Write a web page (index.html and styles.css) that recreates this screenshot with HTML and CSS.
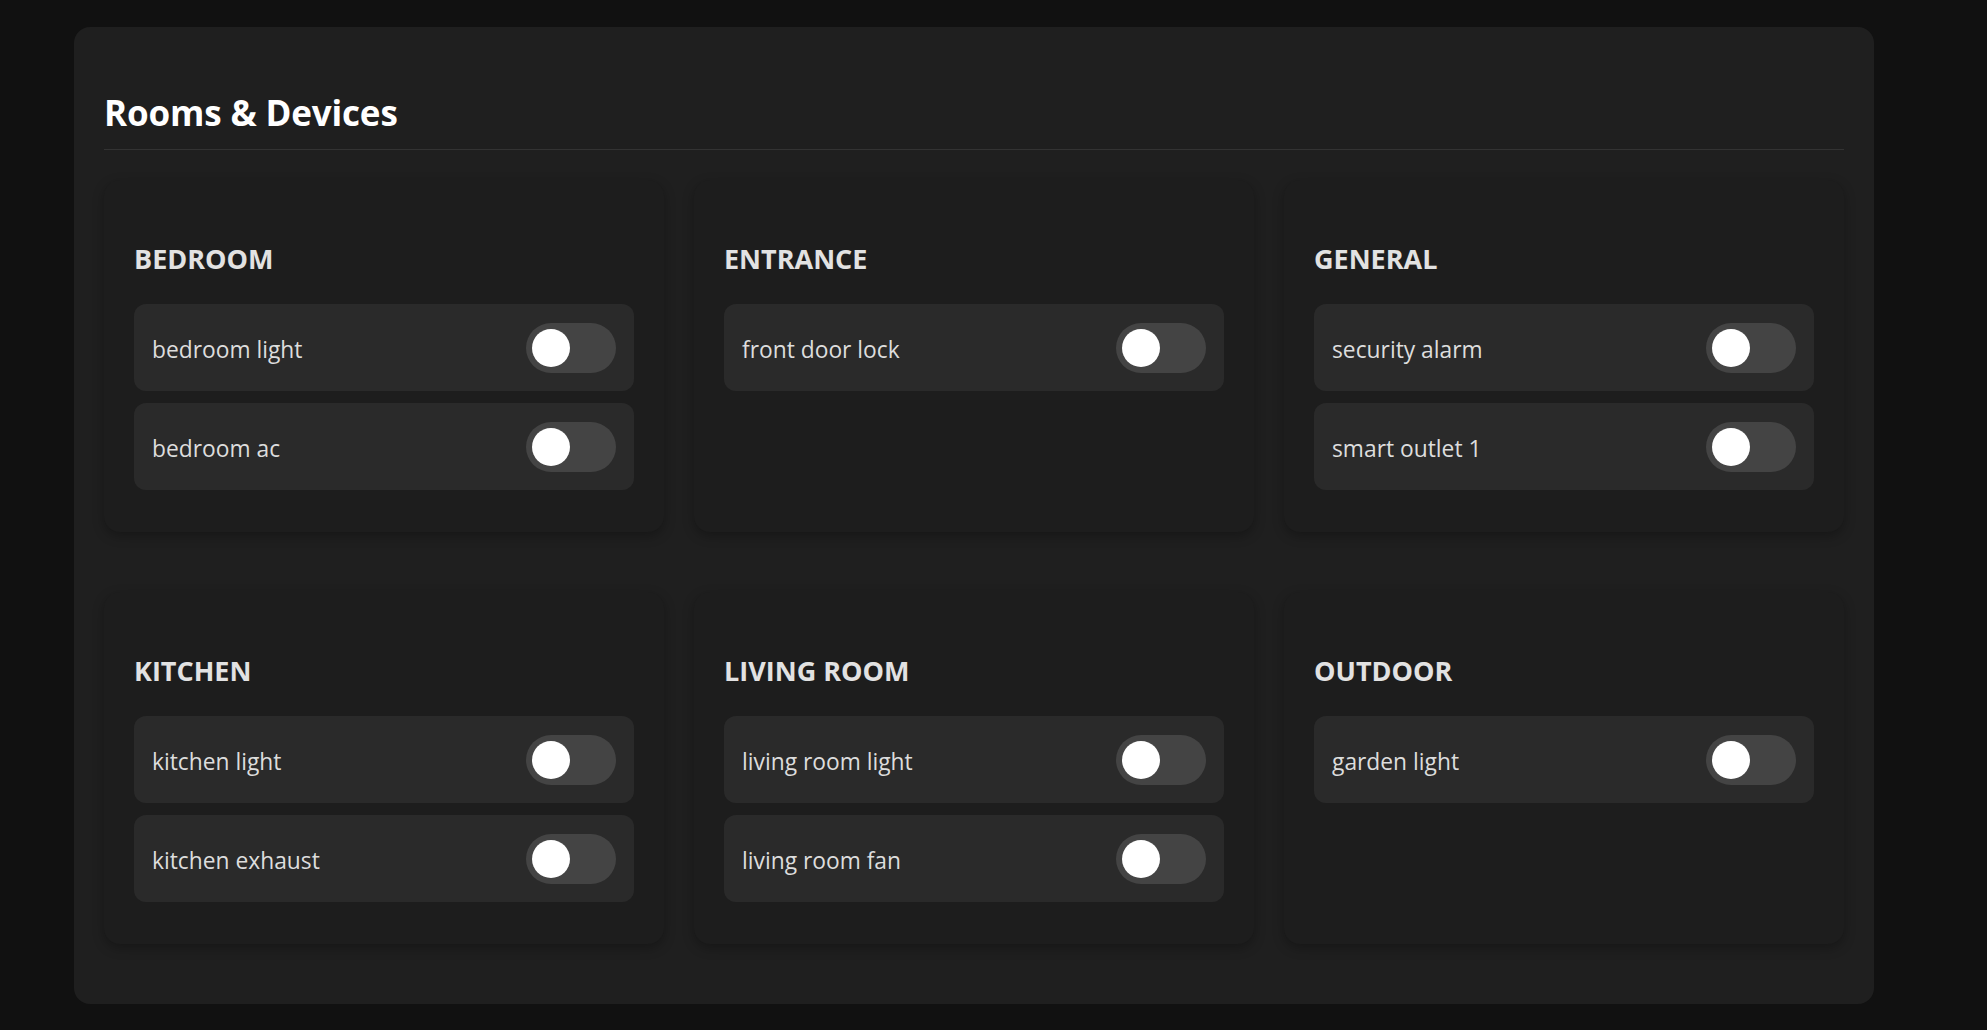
FILE: index.html
```html
<!DOCTYPE html>
<html lang="en">
<head>
<meta charset="utf-8">
<title>Rooms &amp; Devices</title>
<link rel="stylesheet" href="styles.css">
</head>
<body>
<section class="panel">
  <h2 class="panel-title">Rooms &amp; Devices</h2>
  <div class="rooms">
    <div class="room">
      <h3 class="room-name">Bedroom</h3>
      <div class="device"><span class="device-name">bedroom light</span><span class="toggle"><span class="knob"></span></span></div>
      <div class="device"><span class="device-name">bedroom ac</span><span class="toggle"><span class="knob"></span></span></div>
    </div>
    <div class="room">
      <h3 class="room-name">Entrance</h3>
      <div class="device"><span class="device-name">front door lock</span><span class="toggle"><span class="knob"></span></span></div>
    </div>
    <div class="room">
      <h3 class="room-name">General</h3>
      <div class="device"><span class="device-name">security alarm</span><span class="toggle"><span class="knob"></span></span></div>
      <div class="device"><span class="device-name">smart outlet 1</span><span class="toggle"><span class="knob"></span></span></div>
    </div>
    <div class="room">
      <h3 class="room-name">Kitchen</h3>
      <div class="device"><span class="device-name">kitchen light</span><span class="toggle"><span class="knob"></span></span></div>
      <div class="device"><span class="device-name">kitchen exhaust</span><span class="toggle"><span class="knob"></span></span></div>
    </div>
    <div class="room">
      <h3 class="room-name">Living Room</h3>
      <div class="device"><span class="device-name">living room light</span><span class="toggle"><span class="knob"></span></span></div>
      <div class="device"><span class="device-name">living room fan</span><span class="toggle"><span class="knob"></span></span></div>
    </div>
    <div class="room">
      <h3 class="room-name">Outdoor</h3>
      <div class="device"><span class="device-name">garden light</span><span class="toggle"><span class="knob"></span></span></div>
    </div>
  </div>
</section>
</body>
</html>
```
FILE: styles.css
```css
* { box-sizing: border-box; }

html, body {
  margin: 0;
  padding: 0;
  background: #111111;
  font-family: "Open Sans", "Noto Sans", "DejaVu Sans", sans-serif;
  color: #dddddd;
}

body {
  padding: 27px 0 27px 74px;
}

.panel {
  width: 1800px;
  background: #1f1f1f;
  border-radius: 16px;
  padding: 30px;
}

.panel-title {
  margin: 35px 0 0 0;
  padding-bottom: 15px;
  border-bottom: 1px solid #333333;
  font-size: 35px;
  line-height: 42px;
  font-weight: 700;
  letter-spacing: -0.15px;
  color: #ffffff;
}

.rooms {
  display: grid;
  grid-template-columns: repeat(3, 560px);
  column-gap: 30px;
  row-gap: 60px;
  margin: 30px 0 30px 0;
}

.room {
  background: #1d1d1d;
  border-radius: 16px;
  padding: 30px;
  box-shadow: 0 4px 12px rgba(0, 0, 0, 0.28);
}

.room-name {
  margin: 33px 0 29px 0;
  font-size: 27px;
  line-height: 32px;
  font-weight: 700;
  letter-spacing: 0;
  text-transform: uppercase;
  color: #e2e2e2;
}

.device {
  display: flex;
  align-items: center;
  justify-content: space-between;
  background: #2a2a2a;
  border-radius: 12px;
  padding: 18.5px 18px;
  margin-bottom: 12px;
}

.device-name {
  padding-top: 4px;
  font-size: 22.8px;
  color: #dddddd;
}

.toggle {
  position: relative;
  display: block;
  width: 90px;
  height: 50px;
  border-radius: 25px;
  background: #444444;
}

.knob {
  position: absolute;
  top: 6px;
  left: 6px;
  width: 38px;
  height: 38px;
  border-radius: 50%;
  background: #ffffff;
}
```
